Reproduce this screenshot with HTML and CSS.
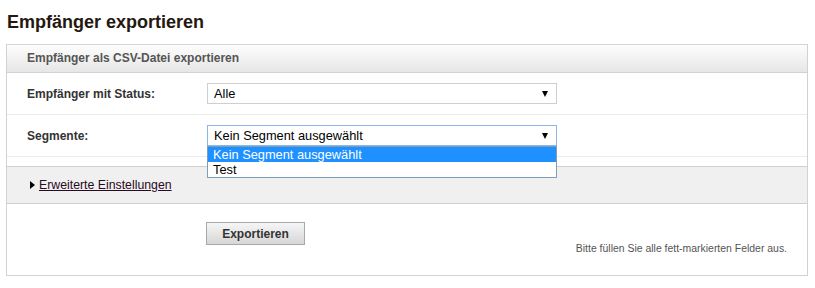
FILE: index.html
```html
<!DOCTYPE html>
<html lang="de">
<head>
  <meta charset="UTF-8" />
  <title>Empfänger exportieren</title>
  <link rel="stylesheet" href="styles.css">
</head>
<body>

  <h1>Empfänger exportieren</h1>

  <div class="panel">
    <div class="panel-head">Empfänger als CSV-Datei exportieren</div>

    <div class="row">
      <label class="row-label">Empfänger mit Status:</label>
      <div class="select">
        <span>Alle</span>
        <i class="arrow"></i>
      </div>
    </div>

    <div class="row">
      <label class="row-label">Segmente:</label>
      <div class="select focused">
        <span>Kein Segment ausgewählt</span>
        <i class="arrow"></i>
        <!-- open option list -->
        <ul class="options">
          <li class="selected">Kein Segment ausgewählt</li>
          <li>Test</li>
        </ul>
      </div>
    </div>

    <div class="advanced">
      <i class="caret"></i>
      <a href="#">Erweiterte Einstellungen</a>
    </div>

    <div class="actions">
      <button type="submit">Exportieren</button>
      <p class="note">Bitte füllen Sie alle fett-markierten Felder aus.</p>
    </div>
  </div>

</body>
</html>
```

FILE: styles.css
```css
body {
  font-family: 'Liberation Sans', Arial, sans-serif;
  background-color: #fff;
  margin: 0;
  padding: 0;
}

h1 {
  margin: 0;
  padding: 11px 7px 0;
  font-size: 18px;
  line-height: 22px;
  color: #24180f;
}

.panel {
  width: 802px;
  box-sizing: border-box;
  margin: 11px 0 0 6px;
  border: 1px solid #d2d2d2;
  border-top-color: #d6d6d6;
}

.panel-head {
  height: 27px;
  line-height: 27px;
  padding-left: 20px;
  font-size: 12px;
  font-weight: bold;
  color: #555;
  background: linear-gradient(#fdfdfd, #e6e6e6);
  border-bottom: 1px solid #d2d2d2;
}

.row {
  display: flex;
  align-items: center;
  height: 41px;
  border-bottom: 1px solid #ebebeb;
}

.row-label {
  width: 180px;
  padding-left: 20px;
  font-size: 12px;
  font-weight: bold;
  color: #333;
}

.select {
  position: relative;
  width: 350px;
  height: 21px;
  box-sizing: border-box;
  border: 1px solid #cfcfcf;
  padding-left: 6px;
  font-size: 12.8px;
  line-height: 20px;
  color: #000;
  background-color: #fff;
}

.select.focused {
  border-color: #8bb6e6;
}

.arrow {
  position: absolute;
  right: 8px;
  top: 7px;
  width: 0;
  height: 0;
  border-left: 3.5px solid transparent;
  border-right: 3.5px solid transparent;
  border-top: 6px solid #000;
}

/* Dropdown list */
.options {
  position: absolute;
  left: -1px;
  top: 20px;
  width: 350px;
  box-sizing: border-box;
  margin: 0;
  padding: 0;
  list-style: none;
  border: 1px solid #7f9db9;
  background-color: #fff;
  z-index: 10;
}

.options li {
  height: 15px;
  line-height: 15px;
  padding-left: 5px;
}

.options li.selected {
  background-color: #1e90ff;
  color: #fff;
}

.advanced {
  display: flex;
  align-items: center;
  height: 36px;
  margin-top: 9px;
  padding-left: 23px;
  background-color: #f0f0f0;
  border-top: 1px solid #cfcfcf;
  border-bottom: 1px solid #cfcfcf;
  font-size: 12.3px;
}

.caret {
  width: 0;
  height: 0;
  border-top: 4px solid transparent;
  border-bottom: 4px solid transparent;
  border-left: 5px solid #000;
  margin-right: 4px;
}

.advanced a {
  color: #2a0a22;
}

.actions {
  display: flex;
  justify-content: space-between;
  align-items: flex-start;
  height: 71px;
  box-sizing: border-box;
  padding: 18px 20px 0 199px;
}

button {
  width: 99px;
  height: 23px;
  padding: 0;
  font-family: inherit;
  font-size: 12px;
  font-weight: bold;
  color: #333;
  background: linear-gradient(#f6f6f6, #d6d6d6);
  border: 1px solid #a8a8a8;
  cursor: pointer;
}

.note {
  margin: 21px 0 0;
  font-size: 10.45px;
  line-height: 12px;
  color: #555;
}
```
